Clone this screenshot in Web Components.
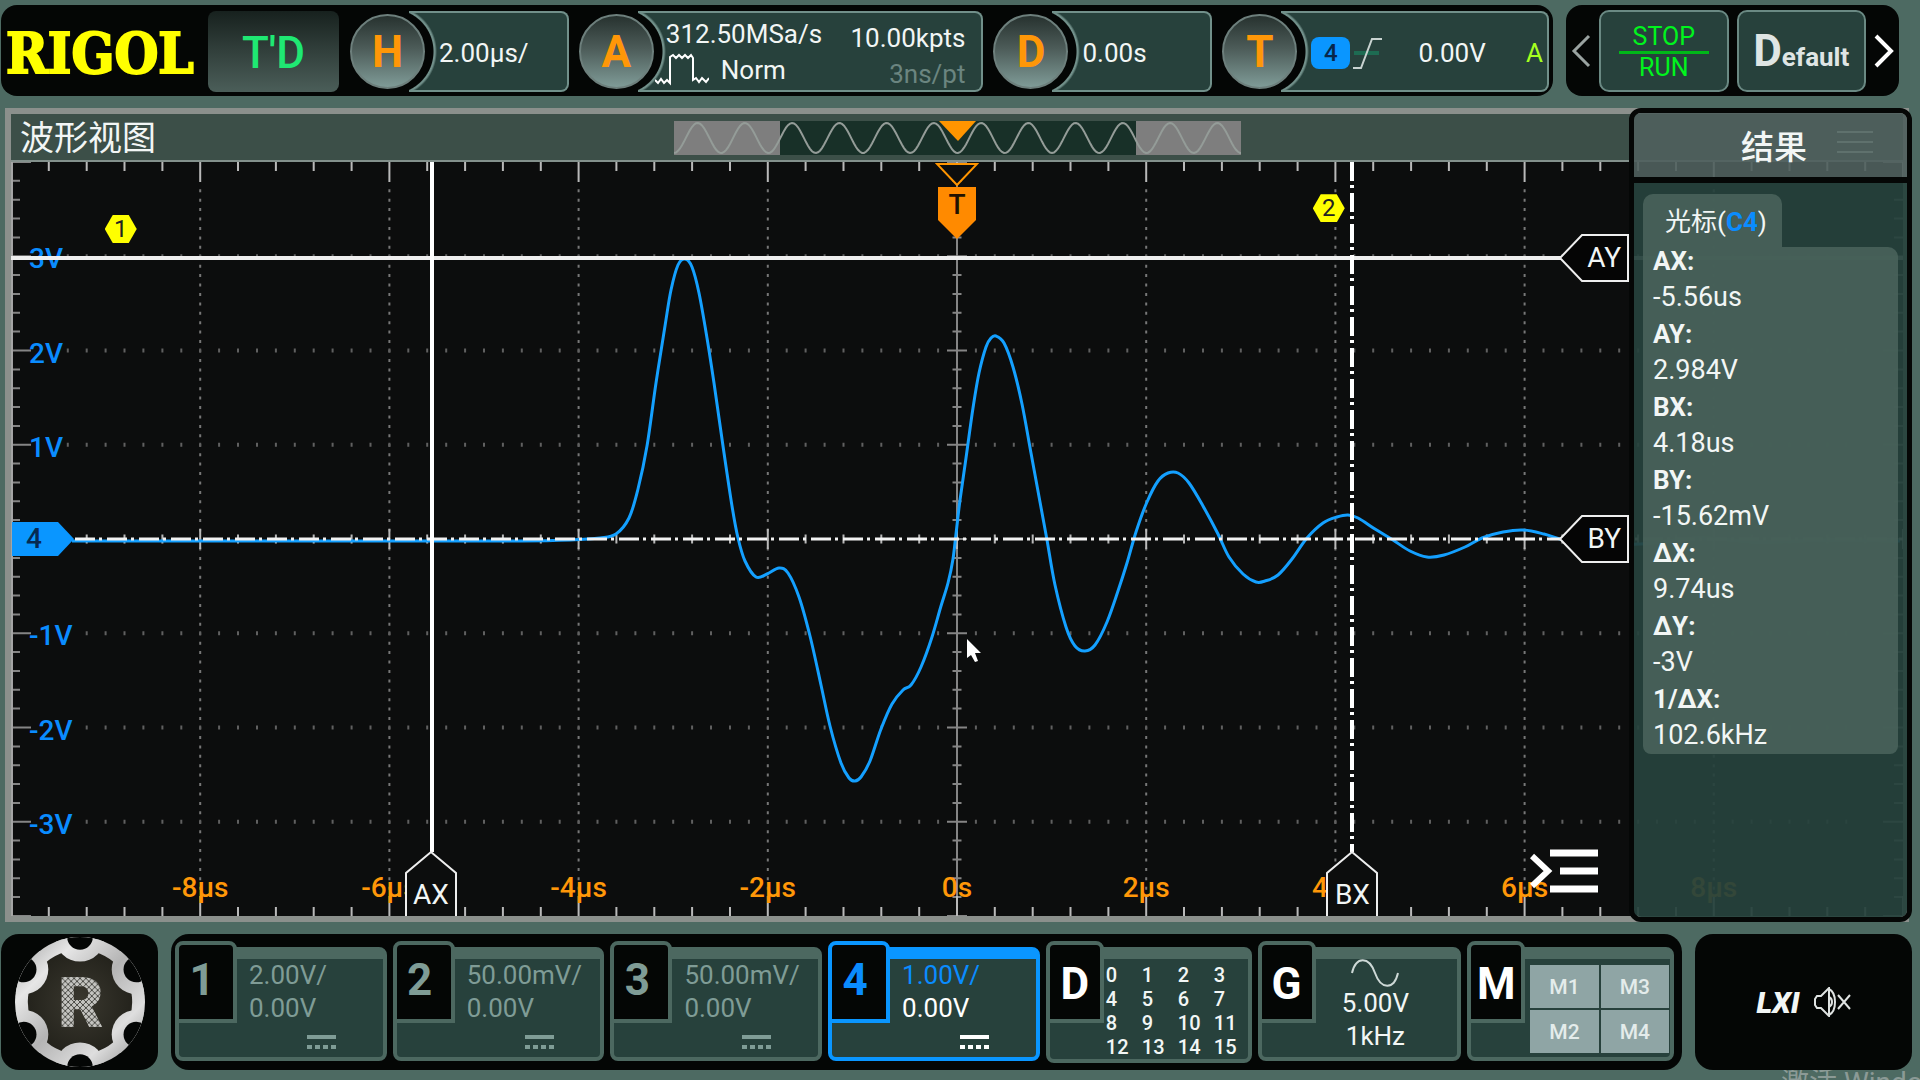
<!DOCTYPE html>
<html lang="zh-CN">
<head>
<meta charset="utf-8">
<meta name="viewport" content="width=device-width, initial-scale=1">
<title>RIGOL</title>
<style>
  * { box-sizing: border-box; }
  html, body { margin: 0; }
  body {
    background: #4d6a62;
    color: #f2f6f5;
    font-family: Roboto, 'Noto Sans CJK SC', sans-serif;
    font-size: 26px;
    overflow: hidden;
  }
</style>
</head>
<body>
<scope-app></scope-app>

<script>
const BASE = `
  * { box-sizing: border-box; }
  button { font: inherit; color: inherit; border: 0; padding: 0; margin: 0; background: none; cursor: pointer; }
  svg { display: block; }
`;

class ScopeElement extends HTMLElement {
  constructor() {
    super();
    this.attachShadow({ mode: 'open' });
  }

  connectedCallback() {
    this.shadowRoot.innerHTML = `<style>${BASE}${this.styles()}</style>${this.render()}`;
  }

  styles() { return ''; }
  render() { return '<slot></slot>'; }
}

// Round knob with a value box whose left side curves around it
class KnobModule extends ScopeElement {
  styles() {
    return `
      :host { display: flex; align-items: center; min-width: 0; }
      .knob {
        flex: none;
        position: relative;
        z-index: 1;
        width: 75px;
        height: 75px;
        margin-right: -16px;
        border-radius: 50%;
        border: 2px solid #6d7f7c;
        background: linear-gradient(#27322f, #4c5b58 45%, #7f9b97);
        color: #ff9708;
        font-size: 44px;
        font-weight: 700;
        line-height: 73px;
      }
      .value {
        flex: 1;
        align-self: stretch;
        min-width: 0;
        display: flex;
        align-items: center;
        padding: 2px 0 0 30px;
        border: 2px solid #71908a;
        border-left: 0;
        border-radius: 0 8px 8px 0;
        background: radial-gradient(circle at -18px 50%, #040605 42px, #71908a 43px, #71908a 44px, #27413c 46px);
      }
    `;
  }

  render() {
    return `
      <button class="knob">${this.getAttribute('label')}</button>
      <div class="value"><slot></slot></div>
    `;
  }
}
customElements.define('knob-module', KnobModule);

class TopBar extends ScopeElement {
  styles() {
    return `
      :host { display: flex; gap: 13px; height: 91px; padding-right: 21px; }
      .box { display: flex; background: #040605; border-radius: 16px; }
      .main { flex: 1; padding: 6px 4px 4px 5px; }
      .logo {
        width: 202px;
        color: #ffff00;
        font-family: 'DejaVu Serif Condensed', 'DejaVu Serif', serif;
        font-weight: 700;
        font-size: 56px;
        line-height: 84px;
        white-space: nowrap;
        -webkit-text-stroke: 2px #ffff00;
      }
      .run-state {
        width: 131px;
        margin-right: 11px;
        border-radius: 8px;
        background: linear-gradient(#17211e, #32403c 50%, #4b5e59);
        color: #1fe873;
        font-size: 44px;
        font-weight: 500;
        line-height: 84px;
      }
      .modules { flex: 1; display: flex; gap: 10px; }
      .h, .d { flex: 219; }
      .a { flex: 405; }
      .t { flex: 327; }
      .acquire { flex: 1; display: flex; flex-wrap: wrap; justify-content: space-between; margin-left: -2px; padding: 2px 16px 0 0; line-height: 36px; }
      .acquire .pair { display: flex; flex-direction: column; }
      .right { text-align: right; padding-top: 4px; }
      .norm { display: flex; gap: 12px; margin-left: -11px; }
      .dim { color: #6b8580; }
      .source {
        width: 39px;
        height: 32px;
        border-radius: 8px;
        background: #0a96ff;
        color: #08264a;
        font-size: 24px;
        font-weight: 500;
        text-align: center;
        line-height: 32px;
      }
      .level { flex: 1; padding-right: 6px; text-align: center; }
      .auto { color: #a6ff1f; padding-right: 4px; }
      .side { width: 333px; padding: 5px; gap: 8px; align-items: center; justify-content: space-between; }
      .soft {
        flex: 1;
        height: 82px;
        border: 2px solid #6a8983;
        border-radius: 10px;
        background: #27413c;
      }
      .stop { padding-top: 4px; color: #00f51d; font-size: 25px; line-height: 28px; }
      .stop span { display: block; margin: 0 18px; }
      .stop span + span { border-top: 3px solid #00b818; }
      .default {
        font-size: 26px;
        font-weight: 700;
        color: #dfe5e4;
      }
      .default::first-letter { font-size: 44px; }
    `;
  }

  render() {
    return `
      <div class="box main">
        <div class="logo">RIGOL</div>
        <button class="run-state">T'D</button>
        <div class="modules">
          <knob-module class="h" label="H">2.00µs/</knob-module>
          <knob-module class="a" label="A">
            <div class="acquire">
              <div class="pair">
                <span>312.50MSa/s</span>
                <span class="norm">
                  <svg width="54" height="36" viewBox="0 0 54 36" fill="none" stroke="#fff" stroke-width="2">
                    <path d="M0 28l3 3 3-4 3 4 3-3 3 3V5l3-2 3 3 3-3 3 3 3-3 3 3 3-3 2 3v22l3-2 3 4 3-4 4 4 3-4"/>
                  </svg>
                  <span>Norm</span>
                </span>
              </div>
              <div class="pair right">
                <span>10.00kpts</span>
                <span class="dim">3ns/pt</span>
              </div>
            </div>
          </knob-module>
          <knob-module class="d" label="D">0.00s</knob-module>
          <knob-module class="t" label="T">
            <span class="source">4</span>
            <svg width="34" height="34" viewBox="0 0 34 34" fill="none">
              <path d="M4 17h25" stroke="#1d6b52" stroke-width="4"/>
              <path d="M3 32h8L22 3h10" stroke="#c9d3d1" stroke-width="2"/>
            </svg>
            <span class="level">0.00V</span>
            <span class="auto">A</span>
          </knob-module>
        </div>
      </div>
      <div class="box side">
        <button aria-label="Previous">
          <svg width="20" height="34" viewBox="0 0 20 34" fill="none" stroke="#9aa3a1" stroke-width="3"><path d="M18 2L3 17l15 15"/></svg>
        </button>
        <button class="soft stop"><span>STOP</span><span>RUN</span></button>
        <button class="soft default">Default</button>
        <button aria-label="Next">
          <svg width="20" height="34" viewBox="0 0 20 34" fill="none" stroke="#fff" stroke-width="4"><path d="M2 2l15 15L2 32"/></svg>
        </button>
      </div>
    `;
  }
}
customElements.define('top-bar', TopBar);

// Memory overview: the dark middle part is the section on screen
class MemoryStrip extends ScopeElement {
  styles() {
    return ':host { display: block; width: 567px; height: 34px; }';
  }

  render() {
    let wave = 'M0 32';
    for (let x = 2; x <= 568; x += 2) {
      wave += `L${x} ${(17 + 15 * Math.cos(x / 567 * 24 * Math.PI)).toFixed(1)}`;
    }
    return `
      <svg width="567" height="34" viewBox="0 0 567 34">
        <rect width="567" height="34" fill="#7e7e7e"/>
        <rect x="106" width="356" height="34" fill="#183028"/>
        <path d="${wave}" fill="none" stroke="#949c98" stroke-width="2"/>
        <path d="M265 0h37l-18 20z" fill="#ff9500"/>
      </svg>
    `;
  }
}
customElements.define('memory-strip', MemoryStrip);

const TRACE = [
  [72, 541], [200, 541], [400, 541], [520, 541], [570, 540], [600, 538], [616, 534], [629, 518],
  [638, 489], [647, 446], [656, 383], [665, 326], [671, 290], [678, 265], [685, 259], [692, 267],
  [699, 293], [707, 338], [714, 383], [723, 446], [732, 506], [738, 538], [745, 561], [756, 577],
  [767, 574], [779, 568], [788, 573], [799, 597], [810, 636], [821, 685], [830, 726], [841, 763],
  [849, 778], [855, 781], [861, 777], [870, 761], [881, 729], [892, 704], [903, 690], [911, 685],
  [921, 667], [932, 637], [941, 606], [948, 583], [953, 559], [956, 534], [960, 500], [966, 458],
  [973, 408], [979, 373], [986, 347], [991, 338], [996, 336], [1004, 343], [1013, 367], [1022, 404],
  [1031, 453], [1040, 502], [1047, 540], [1055, 585], [1066, 627], [1075, 646], [1085, 651],
  [1095, 645], [1107, 622], [1118, 591], [1127, 563], [1136, 532], [1147, 502], [1158, 481],
  [1168, 473], [1178, 473], [1189, 483], [1203, 506], [1218, 534], [1229, 557], [1243, 574],
  [1256, 582], [1265, 581], [1278, 575], [1292, 559], [1307, 538], [1323, 523], [1337, 517],
  [1348, 515], [1358, 518], [1375, 529], [1393, 540], [1410, 551], [1427, 557], [1444, 555],
  [1465, 547], [1482, 538], [1503, 532], [1523, 530], [1544, 534], [1560, 539], [1590, 544],
  [1640, 544], [1700, 538], [1760, 542], [1830, 540], [1900, 541]
];

// Catmull-Rom spline through the samples
function smoothPath(points) {
  let d = `M${points[0]}`;
  for (let i = 0; i < points.length - 1; i++) {
    const a = points[i - 1] || points[i];
    const b = points[i];
    const c = points[i + 1];
    const e = points[i + 2] || c;
    const c1 = [b[0] + (c[0] - a[0]) / 6, b[1] + (c[1] - a[1]) / 6];
    const c2 = [c[0] - (e[0] - b[0]) / 6, c[1] - (e[1] - b[1]) / 6];
    d += `C${c1.map(n => n.toFixed(1))} ${c2.map(n => n.toFixed(1))} ${c}`;
  }
  return d;
}

class WavePlot extends ScopeElement {
  styles() {
    return `
      :host { display: block; position: relative; background: #0c0d0d; overflow: hidden; }
      .plot { position: absolute; inset: 0; width: 100%; height: 100%; }
      .plot * { vector-effect: non-scaling-stroke; }
      /* --x and --y count divisions from the centre of the grid */
      .at {
        position: absolute;
        left: calc(50% + var(--x, 0) * 10%);
        top: calc(50% - var(--y, 0) * 12.5%);
        font-size: 28px;
        line-height: 32px;
        font-weight: 500;
        transform: translate(-50%, -50%);
        white-space: nowrap;
      }
      .volt { left: 18px; padding-top: 6px; transform: translateY(-50%); color: #0a8cff; }
      .time { top: auto; bottom: 12px; transform: translateX(-50%); color: #ff9708; }
      .tag { font-weight: 400; }
      .tag svg { position: absolute; inset: 0; z-index: -1; }
      .tag.vertical { top: auto; bottom: 0; width: 52px; height: 66px; padding-top: 29px; text-align: center; transform: translateX(-50%); }
      .tag.horizontal { left: auto; right: 274px; width: 71px; height: 48px; padding: 8px 8px 0 0; text-align: right; transform: translateY(-50%); }
      .zero { left: 0; width: 65px; height: 36px; padding-left: 15px; line-height: 36px; color: #062a52; transform: translateY(-50%); }
      .zero svg { position: absolute; inset: 0; z-index: -1; }
      .hex {
        width: 32px;
        height: 28px;
        background: #ffff00;
        clip-path: polygon(25% 0, 75% 0, 100% 50%, 75% 100%, 25% 100%, 0 50%);
        color: #222;
        font-size: 24px;
        font-weight: 400;
        line-height: 28px;
        text-align: center;
      }
      .trigger { top: 0; transform: translateX(-50%); width: 44px; height: 78px; padding-top: 27px; color: #221200; font-size: 28px; text-align: center; }
      .trigger svg { position: absolute; inset: 0; z-index: -1; }
      .menu { position: absolute; right: 305px; bottom: 21px; }
      .pointer { top: calc(50% + 100px); left: calc(50% + 10px); transform: none; }
    `;
  }

  grid() {
    const left = 11, top = 162, w = 1892, h = 754;
    const dx = w / 10, dy = h / 8, cx = left + w / 2, cy = top + h / 2;
    let ticks = '', dim = '', dotsV = '', dotsH = '';
    for (let i = 0; i <= 50; i++) {
      const x = (left + i * dx / 5).toFixed(1);
      const len = i % 5 ? 9 : 20;
      ticks += `M${x} ${top}v${len}M${x} ${top + h}v${-len}`;
      ticks += `M${x} ${cy - len / 2}v${len}`;
    }
    for (let i = 0; i <= 40; i++) {
      const y = (top + i * dy / 5).toFixed(1);
      const len = i % 5 ? 9 : 20;
      dim += `M${left} ${y}h${len}M${left + w} ${y}h${-len}`;
      dim += `M${cx - len / 2} ${y}h${len}`;
    }
    for (let i = 1; i < 10; i++) {
      if (i === 5) continue;
      for (let j = 3; j < 78; j++) dotsV += `M${(left + i * dx).toFixed(1)} ${(top + j * dy / 10 - 1).toFixed(1)}v3`;
    }
    for (let i = 1; i < 8; i++) {
      if (i === 4) continue;
      for (let j = 3; j < 98; j++) dotsH += `M${(left + j * dx / 10).toFixed(1)} ${(top + i * dy - 2).toFixed(1)}v4`;
    }
    return `
      <g fill="none">
        <path d="${dotsV}" stroke="#777" stroke-width="2"/>
        <path d="${dotsH}" stroke="#606060" stroke-width="2"/>
        <path d="${dim}M${cx} ${top}v${h}" stroke="#858585" stroke-width="2"/>
        <path d="${ticks}" stroke="#b9b9b9" stroke-width="2"/>
        <path d="M${left + 1} ${top}v${h}" stroke="#a5a5a5" stroke-width="2"/>
      </g>
    `;
  }

  label(cls, axis, value, text) {
    return `<span class="at ${cls}" style="--${axis}:${value}">${text}</span>`;
  }

  render() {
    const volts = [3, 2, 1, -1, -2, -3].map(v => this.label('volt', 'y', v, `${v}V`)).join('');
    const times = [-8, -6, -4, -2, 0, 2, 4, 6, 8]
      .map(t => this.label('time', 'x', t / 2, t ? `${t}µs` : '0s')).join('');
    const upTag = '<svg width="52" height="66" viewBox="0 0 52 66" fill="#0c0d0d" stroke="#eee" stroke-width="2"><path d="M1 68V23L26 2l25 21v45"/></svg>';
    const sideTag = '<svg width="71" height="48" viewBox="0 0 71 48" fill="#050505" stroke="#eee" stroke-width="2"><path d="M2 24L24 1h46v46H24z"/></svg>';
    return `
      <svg class="plot" viewBox="11 162 1892 754" preserveAspectRatio="none">
        ${this.grid()}
      </svg>
      ${volts}${times}
      <svg class="plot" viewBox="11 162 1892 754" preserveAspectRatio="none" fill="none">
        <path d="${smoothPath(TRACE)}" stroke="#14a0ff" stroke-width="3"/>
        <path d="M75 539H1903" stroke="#f2f2f2" stroke-width="3" stroke-dasharray="20 4 3 5"/>
        <path d="M11 258H1903" stroke="#eee" stroke-width="4"/>
        <path d="M432 162V852" stroke="#fff" stroke-width="4"/>
        <path d="M1352 162V852" stroke="#fff" stroke-width="4" stroke-dasharray="19 4 3 5"/>
      </svg>
      <span class="at zero">
        <svg width="65" height="36" viewBox="0 0 65 36"><path d="M1 1h46l16 17-16 17H1z" fill="#0a96ff"/></svg>4
      </span>
      <span class="at hex" style="--x:-4.42;--y:3.29">1</span>
      <span class="at hex" style="--x:1.965;--y:3.51">2</span>
      <span class="at trigger">
        <svg width="44" height="78" viewBox="0 0 44 78">
          <path d="M2 2h40L22 23z" fill="#0c0d0d" stroke="#ff9500" stroke-width="2"/>
          <path d="M3 25h38v33L22 77 3 58z" fill="#ff8a00"/>
        </svg>T
      </span>
      <span class="at tag vertical" style="--x:-2.78">${upTag}AX</span>
      <span class="at tag vertical" style="--x:2.09">${upTag}BX</span>
      <span class="at tag horizontal" style="--y:2.984">${sideTag}AY</span>
      <span class="at tag horizontal" style="--y:0">${sideTag}BY</span>
      <button class="menu" aria-label="Menu">
        <svg width="68" height="48" viewBox="0 0 68 48" fill="none" stroke="#fff">
          <path d="M2 9l16 15L2 39" stroke-width="6"/>
          <path d="M20 6h48M30 24h38M20 42h48" stroke-width="7"/>
        </svg>
      </button>
      <svg class="at pointer" width="15" height="24" viewBox="0 0 15 24"><path d="M0 0v19l4-3 4 7 3-1-3-8h6z" fill="#fff"/></svg>
    `;
  }
}
customElements.define('wave-plot', WavePlot);

class ResultPanel extends ScopeElement {
  styles() {
    return `
      :host {
        display: flex;
        flex-direction: column;
        width: 283px;
        border: 5px solid #050706;
        border-radius: 12px;
        overflow: hidden;
      }
      header {
        flex: none;
        display: flex;
        align-items: center;
        justify-content: flex-end;
        gap: 30px;
        height: 70px;
        padding-right: 34px;
        border-bottom: 6px solid #050706;
        background: #4f605de8;
      }
      h2 { margin: 0; padding-top: 6px; font-size: 33px; font-weight: 500; line-height: 48px; }
      header svg { margin-bottom: 6px; }
      .body { flex: 1; padding: 11px 9px; background: #26423df0; }
      .tab {
        width: 139px;
        height: 53px;
        padding-left: 22px;
        border-radius: 10px 10px 0 0;
        background: #48625ae8;
        line-height: 56px;
        white-space: nowrap;
      }
      .tab b { color: #0a8cff; font-weight: 700; }
      dl { display: flow-root; margin: 0; padding: 0 10px; border-radius: 0 10px 8px 8px; background: #48625ae8; }
      dt { font-weight: 700; line-height: 36px; }
      dt:first-child { margin-top: -4px; }
      dd { margin: 0; font-size: 27px; line-height: 37px; }
    `;
  }

  render() {
    const rows = [
      ['AX', '-5.56us'], ['AY', '2.984V'], ['BX', '4.18us'], ['BY', '-15.62mV'],
      ['ΔX', '9.74us'], ['ΔY', '-3V'], ['1/ΔX', '102.6kHz']
    ];
    return `
      <header>
        <h2>结果</h2>
        <svg width="36" height="24" viewBox="0 0 36 24" stroke="#5f716d" stroke-width="2"><path d="M0 2h36M0 12h36M0 22h36"/></svg>
      </header>
      <div class="body">
        <div class="tab">光标(<b>C4</b>)</div>
        <dl>${rows.map(([k, v]) => `<dt>${k}:</dt><dd>${v}</dd>`).join('')}</dl>
      </div>
    `;
  }
}
customElements.define('result-panel', ResultPanel);

class WaveView extends ScopeElement {
  styles() {
    return `
      :host { display: flex; position: relative; min-height: 0; padding: 0 11px 0 4px; }
      .frame {
        flex: 1;
        display: flex;
        flex-direction: column;
        border: 6px solid #8b908c;
        background: #3c4f48;
      }
      .title {
        display: grid;
        grid-template-columns: 1fr auto 1fr;
        align-items: center;
        height: 48px;
        border-bottom: 2px solid #83918c;
      }
      h1 { margin: 0; padding-left: 9px; font-size: 34px; font-weight: 400; line-height: 48px; }
      wave-plot { flex: 1; }
      result-panel { position: absolute; top: 0; right: 8px; bottom: 0; }
    `;
  }

  render() {
    return `
      <div class="frame">
        <div class="title"><h1>波形视图</h1><memory-strip></memory-strip></div>
        <wave-plot></wave-plot>
      </div>
      <result-panel></result-panel>
    `;
  }
}
customElements.define('wave-view', WaveView);

class ChannelCard extends ScopeElement {
  styles() {
    return `
      :host { display: grid; min-width: 0; --line: #4c6860; --ink: #7f9c96; }
      :host([tone="on"]) { --line: #0a96ff; --ink: #0a8cff; }
      :host([tone="white"]) { --ink: #fff; }
      .tab, .body { grid-area: 1 / 1; }
      .tab {
        z-index: 1;
        justify-self: start;
        align-self: start;
        width: 62px;
        height: 82px;
        padding: 0 8px 4px 0;
        border: 4px solid var(--line);
        border-radius: 8px 8px 0 0;
        background: #040605;
        color: var(--ink);
        font-size: 44px;
        font-weight: 700;
      }
      :host([tone="white"]) .tab { width: 58px; padding: 4px 0 0; }
      .body {
        margin-top: 6px;
        padding-left: 56px;
        border: 4px solid var(--line);
        border-top-width: 12px;
        border-radius: 8px;
        background: #27413c;
        min-width: 0;
      }
    `;
  }

  render() {
    return `
      <button class="tab">${this.getAttribute('label')}</button>
      <div class="body"><slot></slot></div>
    `;
  }
}
customElements.define('channel-card', ChannelCard);

class AnalogReadout extends ScopeElement {
  styles() {
    return `
      :host { display: block; padding-left: 14px; color: #7f9c96; line-height: 34px; white-space: nowrap; }
      :host([active]) { color: #fff; }
      :host([active]) .scale { color: #0a8cff; }
      div { margin-top: -1px; }
      svg { margin: 10px 0 0 58px; }
    `;
  }

  render() {
    return `
      <div class="scale">${this.getAttribute('scale')}</div>
      <div>${this.getAttribute('offset')}</div>
      <svg width="29" height="15" viewBox="0 0 29 15" fill="none" stroke="currentColor" stroke-width="4">
        <path d="M0 2h29"/><path d="M0 12h29" stroke-dasharray="5 3"/>
      </svg>
    `;
  }
}
customElements.define('analog-readout', AnalogReadout);

class StartButton extends ScopeElement {
  styles() {
    return `
      :host { display: flex; }
      button { width: 157px; display: grid; place-items: center; border-radius: 18px; background: #040605; }
    `;
  }

  render() {
    const angles = [30, 90, 150, 210, 270, 330];
    const at = (a, r) => `cx="${(66 + 66 * Math.cos(a * Math.PI / 180)).toFixed(1)}" cy="${(66 + 66 * Math.sin(a * Math.PI / 180)).toFixed(1)}" r="${r}"`;
    return `
      <button aria-label="Start">
        <svg width="132" height="130" viewBox="0 0 132 132">
          <defs>
            <linearGradient id="steel" gradientUnits="userSpaceOnUse" x1="0" y1="0" x2="132" y2="132">
              <stop offset="0" stop-color="#9d9d9d"/><stop offset=".25" stop-color="#e6e6e6"/>
              <stop offset=".5" stop-color="#b4b4b4"/><stop offset=".75" stop-color="#dedede"/>
              <stop offset="1" stop-color="#8a8a8a"/>
            </linearGradient>
            <radialGradient id="core"><stop offset="0" stop-color="#3a382f"/><stop offset="1" stop-color="#24231c"/></radialGradient>
            <clipPath id="disc"><circle cx="66" cy="66" r="66"/></clipPath>
            <pattern id="mesh" width="6" height="6" patternUnits="userSpaceOnUse">
              <rect width="6" height="6" fill="#c4c4c0"/>
              <path d="M0 0l6 6M6 0L0 6" stroke="#4a4a45" stroke-width="1"/>
            </pattern>
          </defs>
          <g clip-path="url(#disc)">
            <rect width="132" height="132" fill="url(#steel)"/>
            <circle cx="66" cy="66" r="53" fill="url(#core)"/>
            <g fill="url(#steel)">${angles.map(a => `<circle ${at(a, 25)}/>`).join('')}</g>
            <g fill="#040605">${angles.map(a => `<circle ${at(a, 13)}/>`).join('')}</g>
          </g>
          <text x="67" y="91" text-anchor="middle" font-family="Roboto, sans-serif" font-weight="900" font-size="72" fill="url(#mesh)">R</text>
        </svg>
      </button>
    `;
  }
}
customElements.define('start-button', StartButton);

class ChannelBar extends ScopeElement {
  styles() {
    return `
      :host { display: flex; gap: 13px; height: 136px; padding-right: 8px; }
      .cards { flex: 1; display: flex; gap: 6px; padding: 7px 8px 9px 4px; border-radius: 18px; background: #040605; }
      .cards channel-card { flex: 212; }
      .cards .digital { flex: 206; }
      .cards .generator { flex: 204; }
      .cards .math { flex: 207; }
      .bits {
        display: grid;
        grid-template-columns: repeat(4, 36px);
        padding: 4px 0 0;
        font-size: 20px;
        font-weight: 500;
        line-height: 24px;
      }
      .gen { display: flex; flex-direction: column; align-items: center; padding-right: 24px; line-height: 33px; }
      .maths { display: grid; grid-template-columns: 1fr 1fr; gap: 2px; padding: 6px 1px 0 3px; }
      .maths button { height: 43px; background: #8fa5a5; color: #e4eceb; font-size: 21px; font-weight: 500; }
      .status { width: 217px; display: flex; align-items: center; justify-content: center; gap: 14px; border-radius: 18px; background: #040605; }
      .lxi { font-size: 30px; line-height: 36px; padding-top: 2px; font-weight: 900; font-style: italic; }
    `;
  }

  render() {
    const bits = Array.from({ length: 16 }, (_, i) => `<span>${i}</span>`).join('');
    return `
      <start-button></start-button>
      <div class="cards">
        <channel-card label="1"><analog-readout scale="2.00V/" offset="0.00V"></analog-readout></channel-card>
        <channel-card label="2"><analog-readout scale="50.00mV/" offset="0.00V"></analog-readout></channel-card>
        <channel-card label="3"><analog-readout scale="50.00mV/" offset="0.00V"></analog-readout></channel-card>
        <channel-card label="4" tone="on"><analog-readout active scale="1.00V/" offset="0.00V"></analog-readout></channel-card>
        <channel-card class="digital" label="D" tone="white"><div class="bits">${bits}</div></channel-card>
        <channel-card class="generator" label="G" tone="white">
          <div class="gen">
            <svg width="48" height="28" viewBox="0 0 48 28" fill="none" stroke="#cdd8d6" stroke-width="2">
              <path d="M1 14C5-3 18-3 24 14s19 17 23 0"/>
            </svg>
            <span>5.00V</span>
            <span>1kHz</span>
          </div>
        </channel-card>
        <channel-card class="math" label="M" tone="white">
          <div class="maths">
            <button>M1</button><button>M3</button>
            <button>M2</button><button>M4</button>
          </div>
        </channel-card>
      </div>
      <div class="status">
        <span class="lxi">LXI</span>
        <svg width="37" height="30" viewBox="0 0 37 30" fill="none" stroke="#dfe3e2" stroke-width="2">
          <path d="M15 1v28L7 21H3l-2-3v-6l2-3h4z"/>
          <path d="M15 2c8 4 8 22 0 26M15 10c4 2 4 8 0 10M24 8l12 14M36 8L24 22"/>
        </svg>
      </div>
    `;
  }
}
customElements.define('channel-bar', ChannelBar);

class ScopeApp extends ScopeElement {
  styles() {
    return `
      :host { display: flex; flex-direction: column; gap: 12px; height: 100vh; padding: 5px 0 0 1px; }
      wave-view { flex: 1; }
      footer {
        align-self: flex-end;
        width: 139px;
        height: 10px;
        margin-top: -12px;
        overflow: hidden;
        color: #8b9a96;
        font-size: 28px;
        line-height: 26px;
        white-space: nowrap;
      }
      :host, footer { box-sizing: border-box; }
    `;
  }

  render() {
    return `
      <top-bar></top-bar>
      <wave-view></wave-view>
      <channel-bar></channel-bar>
      <footer>激活 Windows</footer>
    `;
  }
}
customElements.define('scope-app', ScopeApp);
</script>
</body>
</html>
